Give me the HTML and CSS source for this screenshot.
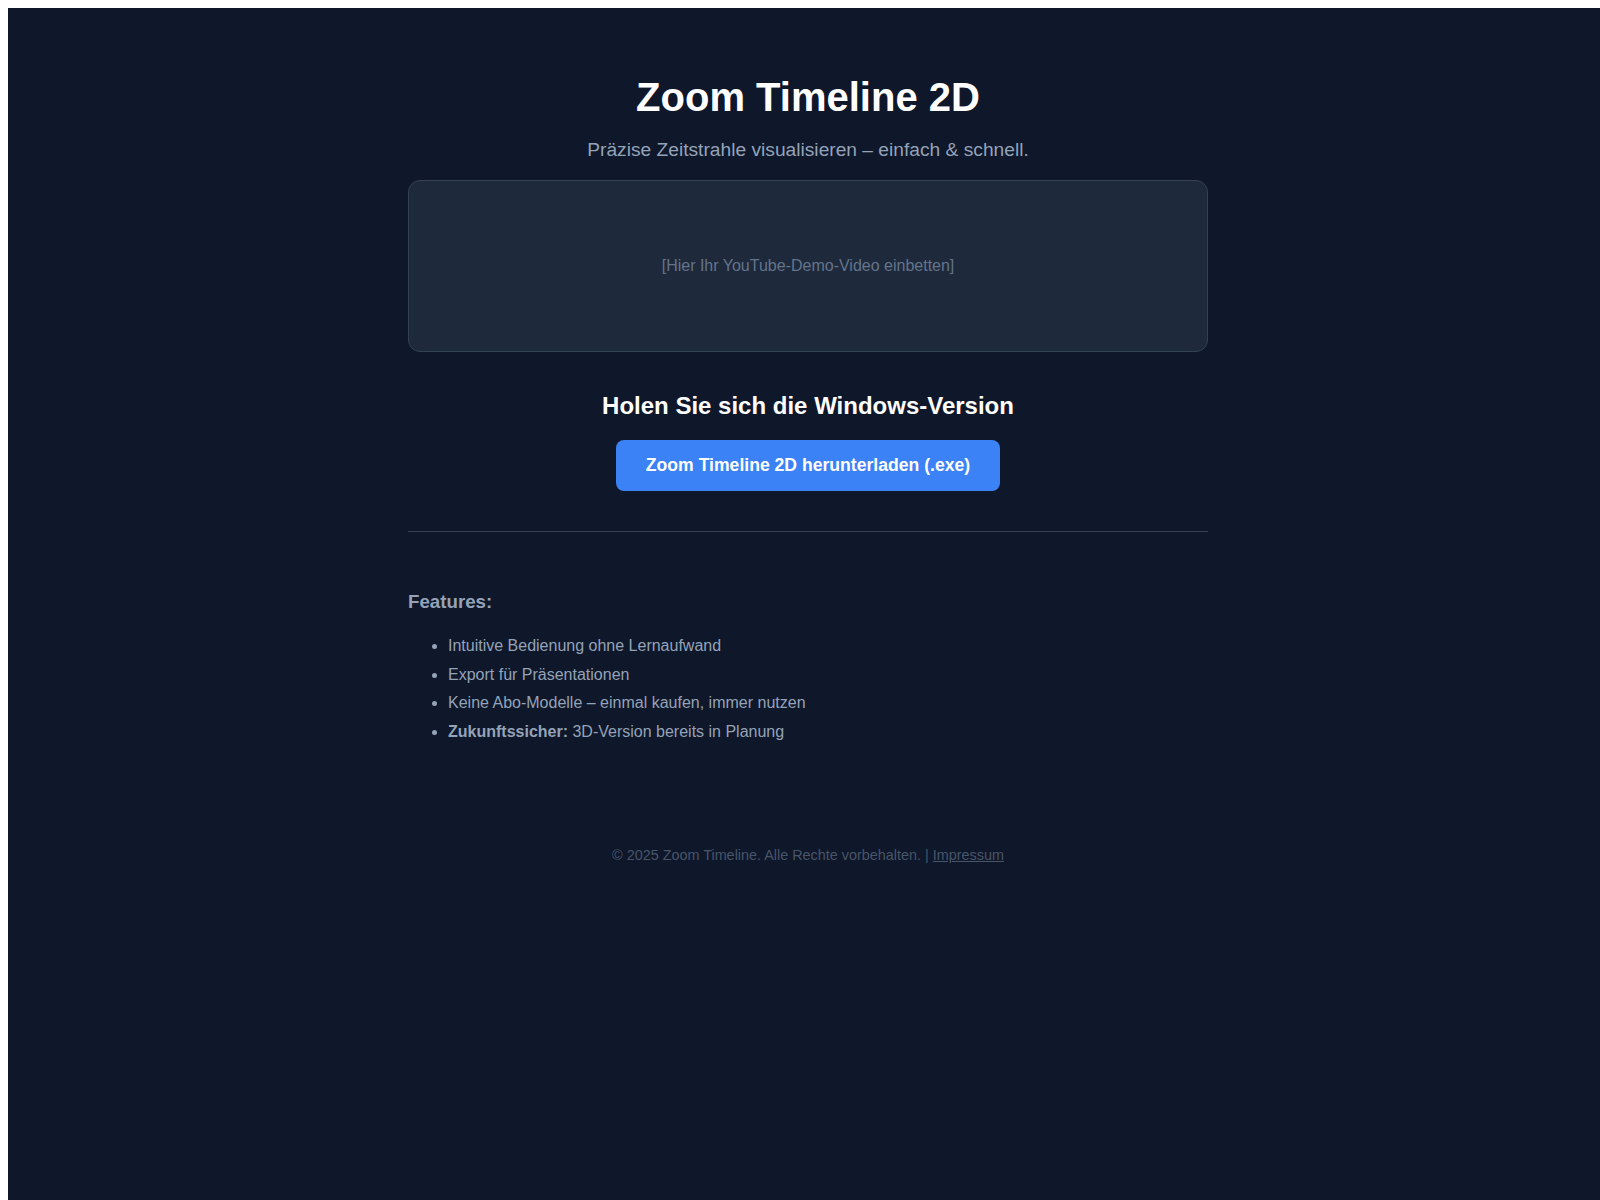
FILE: index.html
```html
<!DOCTYPE html>
<html lang="de">
<head>
<meta charset="utf-8">
<title>Zoom Timeline 2D</title>
<link rel="stylesheet" href="styles.css">
</head>
<body>
<div class="page">
  <main class="container">
    <h1 class="title">Zoom Timeline 2D</h1>
    <p class="subtitle">Präzise Zeitstrahle visualisieren – einfach &amp; schnell.</p>
    <div class="video">[Hier Ihr YouTube-Demo-Video einbetten]</div>
    <section class="download">
      <h2 class="download-title">Holen Sie sich die Windows-Version</h2>
      <a class="btn" href="#">Zoom Timeline 2D herunterladen (.exe)</a>
    </section>
    <hr class="divider">
    <section class="features">
      <h3 class="features-title">Features:</h3>
      <ul class="features-list">
        <li>Intuitive Bedienung ohne Lernaufwand</li>
        <li>Export für Präsentationen</li>
        <li>Keine Abo-Modelle – einmal kaufen, immer nutzen</li>
        <li><strong>Zukunftssicher:</strong> 3D-Version bereits in Planung</li>
      </ul>
    </section>
    <footer class="footer">© 2025 Zoom Timeline. Alle Rechte vorbehalten. | <a href="#">Impressum</a></footer>
  </main>
</div>
</body>
</html>
```

FILE: styles.css
```css
html {
  overflow: hidden;
}
body {
  margin: 8px 0 0 8px;
  font-family: "Liberation Sans", Arial, sans-serif;
}
.page {
  width: 1600px;
  min-height: 1200px;
  background: #0f172a;
  color: #94a3b8;
}
.container {
  width: 800px;
  margin: 0 auto;
  padding-top: 66px;
}
.title {
  margin: 0;
  font-size: 40px;
  line-height: 46px;
  font-weight: 700;
  color: #ffffff;
  text-align: center;
}
.subtitle {
  margin: 19px 0 0;
  font-size: 19.2px;
  line-height: 22px;
  color: #94a3b8;
  text-align: center;
}
.video {
  margin-top: 19px;
  height: 172px;
  box-sizing: border-box;
  border: 1px solid #334155;
  border-radius: 12px;
  background: #1e293b;
  display: flex;
  align-items: center;
  justify-content: center;
  font-size: 16px;
  color: #64748b;
}
.download {
  margin-top: 40px;
  text-align: center;
}
.download-title {
  margin: 0;
  font-size: 24px;
  line-height: 28px;
  font-weight: 700;
  color: #ffffff;
}
.btn {
  display: inline-block;
  margin-top: 20px;
  padding: 15px 30px;
  font-size: 17.6px;
  line-height: 21px;
  font-weight: 700;
  color: #ffffff;
  background: #3b82f6;
  border-radius: 8px;
  text-decoration: none;
}
.divider {
  margin: 40px 0 0;
  border: 0;
  border-top: 1px solid #334155;
  height: 0;
}
.features {
  margin-top: 59px;
}
.features-title {
  margin: 0;
  font-size: 18.72px;
  line-height: 22px;
  font-weight: 700;
  color: #94a3b8;
}
.features-list {
  margin: 19px 0 0;
  padding-left: 40px;
  font-size: 16px;
  line-height: 28.6px;
  color: #94a3b8;
}
.features-list strong {
  color: inherit;
}
.footer {
  margin-top: 101px;
  text-align: center;
  font-size: 14.4px;
  line-height: 17px;
  color: #475569;
}
.footer a {
  color: #475569;
}
```
